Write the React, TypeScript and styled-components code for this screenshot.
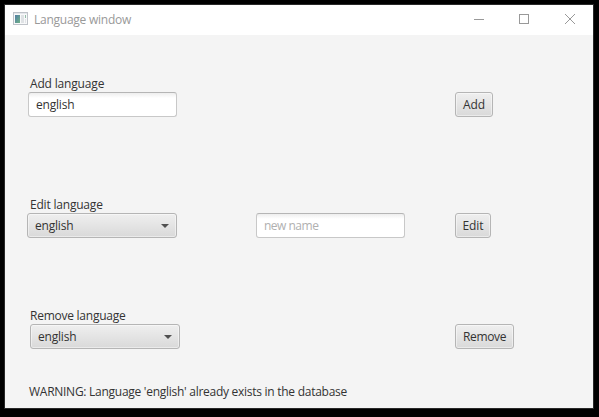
import React from "react";
import styled, { createGlobalStyle } from "styled-components";

const GlobalStyle = createGlobalStyle`
  * { box-sizing: border-box; }
  html, body { margin: 0; background: #000; overflow: hidden; }
`;

const Desktop = styled.div`
  width: 599px;
  height: 417px;
  padding: 4px 5px 8px 4px;
  background: #000;
  font-family: "Open Sans", "Noto Sans", sans-serif;
  font-size: 12px;
  line-height: 16px;
  color: #333;
`;

const Window = styled.main`
  display: flex;
  flex-direction: column;
  width: 590px;
  height: 405px;
  border: 1px solid #292929;
  background: #f4f4f4;
`;

const TitleBar = styled.header`
  display: flex;
  align-items: center;
  flex: 0 0 30px;
  padding-left: 8px;
  background: #fff;
  color: #999;
`;

const IconSlot = styled.div`
  height: 16px;
  svg { display: block; }
`;

const Title = styled.span`
  flex: 1;
  margin-left: 6px;
`;

const Controls = styled.div`
  display: flex;
  svg { display: block; }
`;

const Text = styled.span<{ $spacing?: number }>`
  white-space: pre;
  letter-spacing: ${(p) => p.$spacing ?? 0}px;
`;

const Content = styled.section`
  display: flex;
  flex-direction: column;
  flex: 1;
  padding-top: 41px;
`;

const Group = styled.div<{ $gap: number }>`
  height: 41px;
  margin-bottom: ${(p) => p.$gap}px;
`;

const Label = styled.label`
  display: block;
  height: 16px;
  padding-left: 25px;
`;

const Row = styled.div<{ $indent: number }>`
  display: grid;
  grid-template-columns: ${(p) => 251 - p.$indent}px 199px auto;
  justify-content: start;
  justify-items: start;
  padding-left: ${(p) => p.$indent}px;
`;

const Field = styled.div<{ $placeholder?: boolean }>`
  grid-column: ${(p) => (p.$placeholder ? 2 : 1)};
  width: 149px;
  height: 25px;
  padding: 4px 7px;
  border: 1px solid #c8c8c8;
  border-top-color: #b5b5b5;
  border-radius: 3px;
  background: linear-gradient(#eee, #fff 5px);
  color: ${(p) => (p.$placeholder ? "#b0b0b0" : "#333")};
`;

const Button = styled.button<{ $width: number }>`
  grid-column: 3;
  width: ${(p) => p.$width}px;
  height: 25px;
  padding: 0;
  border: 1px solid #b5b5b5;
  border-radius: 3px;
  background: linear-gradient(#efefef, #d9d9d9);
  box-shadow: inset 0 0 0 1px rgba(255, 255, 255, 0.45);
  font: inherit;
  color: inherit;
`;

const Select = styled.div`
  display: flex;
  align-items: center;
  justify-content: space-between;
  width: 150px;
  height: 25px;
  padding: 0 7px;
  border: 1px solid #b5b5b5;
  border-radius: 3px;
  background: linear-gradient(#efefef, #d9d9d9);
  box-shadow: inset 0 0 0 1px rgba(255, 255, 255, 0.45);
`;

const Status = styled.p`
  margin: 0;
  padding-left: 24px;
`;

const AppIcon = () => (
  <svg width="15" height="13" viewBox="0 0 15 13" shapeRendering="crispEdges">
    <defs>
      <linearGradient id="screen" x1="0" y1="0" x2="1" y2="1">
        <stop stopColor="#527da5" />
        <stop offset="1" stopColor="#70b287" />
      </linearGradient>
    </defs>
    <path fill="#bfc3c9" d="M0 0h15v13H0z" />
    <path fill="#e5e7eb" d="M1 1h13v1H1z" />
    <path fill="#f8f9fa" d="M1 2h13v10H1z" />
    <path fill="url(#screen)" d="M2 3h5v8H2z" />
    <path fill="#dfe2e5" d="M8 3h3v8H8z" />
    <path fill="#93bda8" d="M12 3h1v3h-1z" />
    <path fill="#e0e3e7" d="M12 7h1v4h-1z" />
  </svg>
);

const Arrow = () => (
  <svg width="8" height="4" viewBox="0 0 8 4">
    <path d="M0 0h8L4 4z" fill="#505050" />
  </svg>
);

const Choice = () => (
  <Select>
    <Text $spacing={-0.2}>english</Text>
    <Arrow />
  </Select>
);

export default function App() {
  return (
    <>
      <GlobalStyle />
      <Desktop>
        <Window>
          <TitleBar>
            <IconSlot><AppIcon /></IconSlot>
            <Title><Text $spacing={-0.25}>Language window</Text></Title>
            <Controls>
              <svg width="138" height="30" fill="none" stroke="#999">
                <path d="M19 14.5h10M64.5 9.5h9v9h-9z" shapeRendering="crispEdges" />
                <path d="M110 9l10 10M120 9l-10 10" />
              </svg>
            </Controls>
          </TitleBar>
          <Content>
            <Group $gap={80}>
              <Label><Text $spacing={-0.17}>Add language</Text></Label>
              <Row $indent={23}>
                <Field><Text $spacing={-0.2}>english</Text></Field>
                <Button $width={38}><Text $spacing={-0.1}>Add</Text></Button>
              </Row>
            </Group>
            <Group $gap={70}>
              <Label><Text $spacing={-0.2}>Edit language</Text></Label>
              <Row $indent={22}>
                <Choice />
                <Field $placeholder><Text $spacing={-0.5}>new name</Text></Field>
                <Button $width={36}><Text $spacing={-0.1}>Edit</Text></Button>
              </Row>
            </Group>
            <Group $gap={35}>
              <Label><Text $spacing={-0.25}>Remove language</Text></Label>
              <Row $indent={25}>
                <Choice />
                <Button $width={59}><Text $spacing={-0.35}>Remove</Text></Button>
              </Row>
            </Group>
            <Status><Text $spacing={-0.27}>WARNING: Language 'english' already exists in the database</Text></Status>
          </Content>
        </Window>
      </Desktop>
    </>
  );
}
